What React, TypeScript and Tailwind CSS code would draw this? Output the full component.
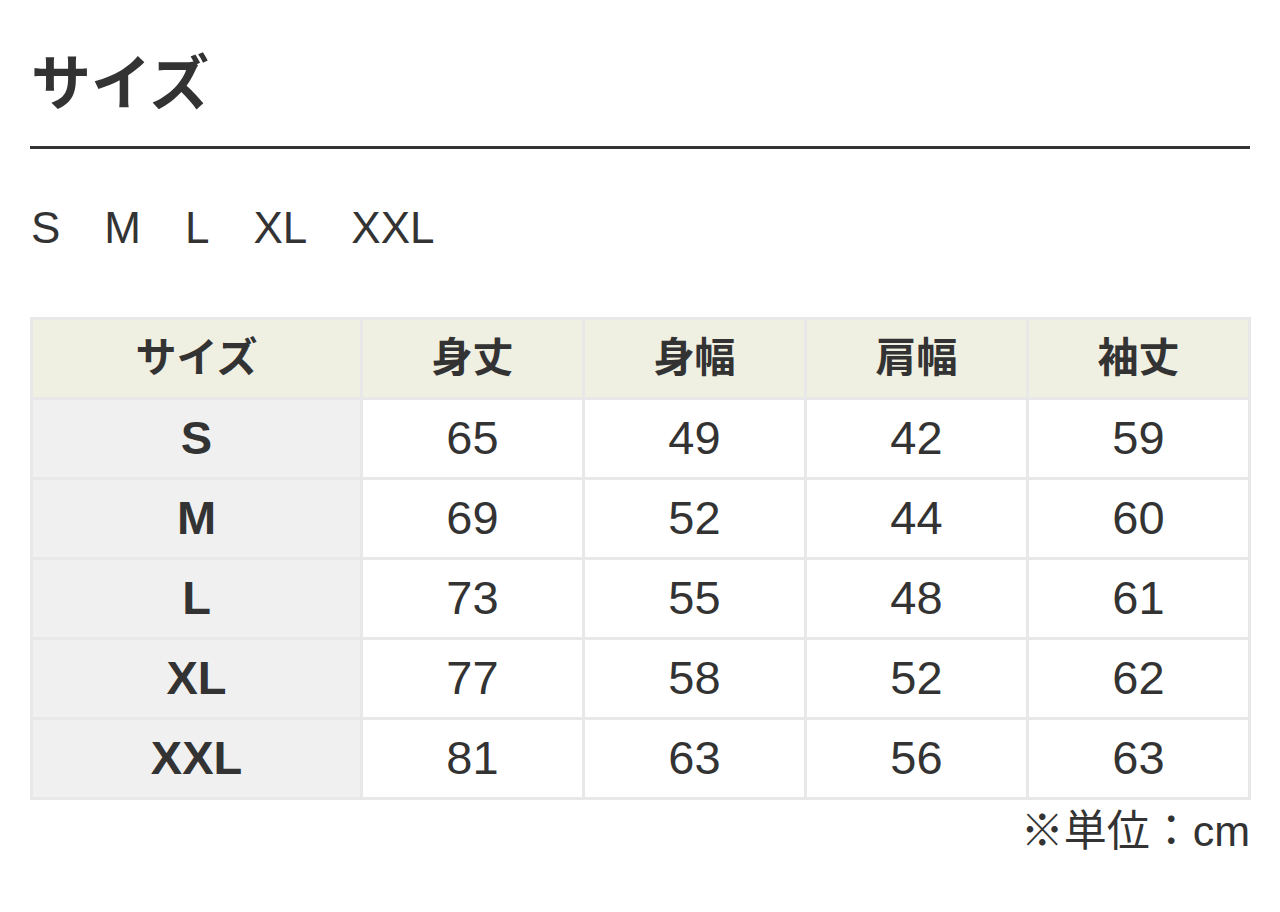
const SIZES = ['S', 'M', 'L', 'XL', 'XXL'];
const HEADERS = ['サイズ', '身丈', '身幅', '肩幅', '袖丈'];
const ROWS: [string, number[]][] = [
  ['S', [65, 49, 42, 59]],
  ['M', [69, 52, 44, 60]],
  ['L', [73, 55, 48, 61]],
  ['XL', [77, 58, 52, 62]],
  ['XXL', [81, 63, 56, 63]],
];

const FONT = {
  fontFamily: '"Liberation Sans", "Noto Sans CJK JP", sans-serif',
};

export default function App() {
  return (
    <div
      className="w-[1280px] h-[912px] bg-white px-[30px] text-[#333]"
      style={FONT}
    >
      <h1 className="pt-[50px] pl-[1px] text-[60px] font-bold leading-[70px]">サイズ</h1>
      <div className="mt-[26px] h-[3px] w-[1220px] bg-[#333]" />

      <div className="mt-[49px] flex gap-[44px] pl-[1px] text-[44px] leading-[60px]">
        {SIZES.map((s) => (
          <span key={s}>{s}</span>
        ))}
      </div>

      <div className="mt-[59px] grid w-[1221px] grid-cols-[327px_repeat(4,1fr)] gap-[3px] bg-[#e8e8e8] p-[3px]">
        {HEADERS.map((h) => (
          <div
            key={h}
            className="flex h-[77px] items-center justify-center bg-[#efefe2] text-[41px] font-bold"
          >
            {h}
          </div>
        ))}
        {ROWS.map(([size, values]) => (
          <div key={size} className="contents">
            <div className="flex h-[77px] items-center justify-center bg-[#f0f0f0] text-[47px] font-bold">
              {size}
            </div>
            {values.map((v, i) => (
              <div
                key={i}
                className="flex h-[77px] items-center justify-center bg-white text-[47px]"
              >
                {v}
              </div>
            ))}
          </div>
        ))}
      </div>

      <div className="mt-[6px] w-[1220px] text-right text-[43px] leading-[50px]">※単位：cm</div>
    </div>
  );
}
